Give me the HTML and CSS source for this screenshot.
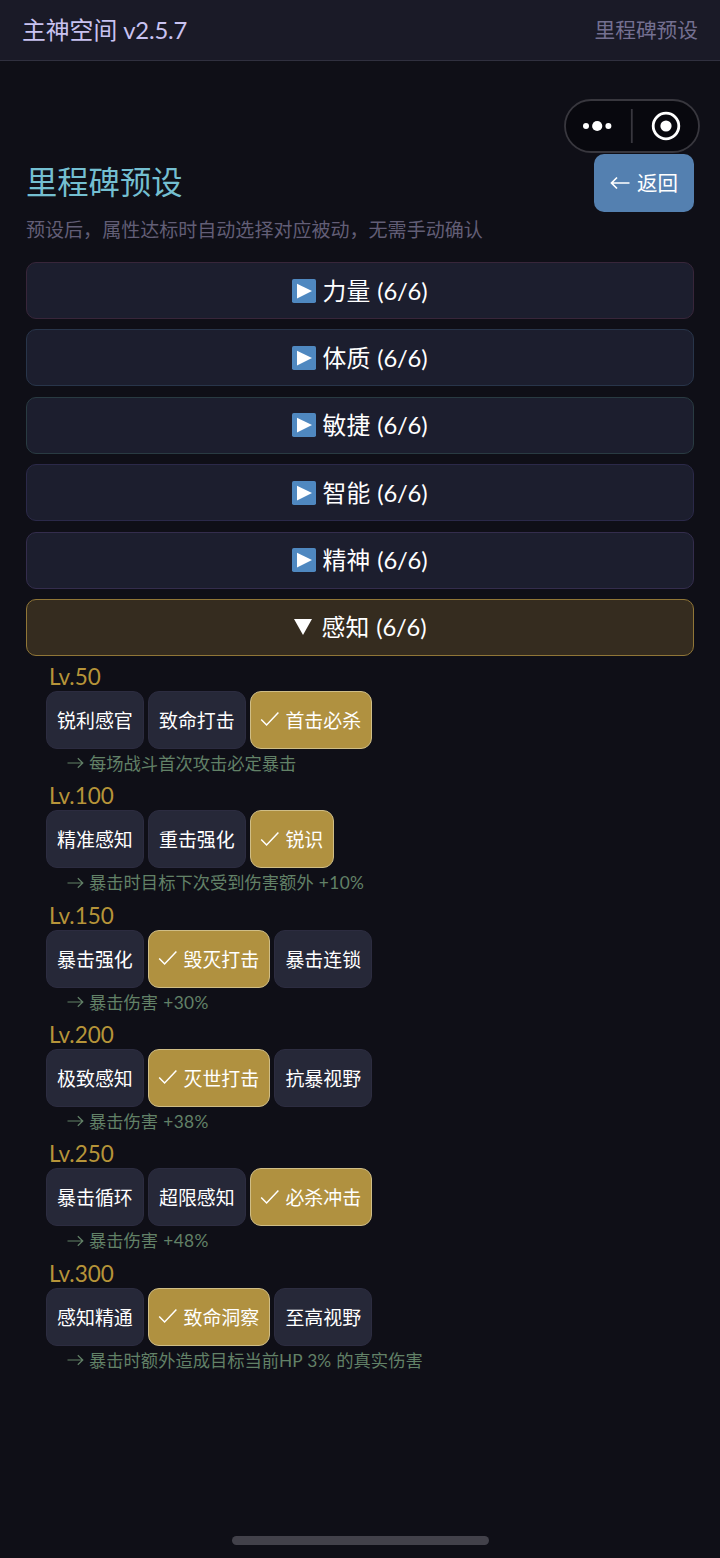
FILE: index.html
```html
<!DOCTYPE html>
<html lang="zh-CN">
<head>
<meta charset="utf-8">
<title>里程碑预设</title>
<link rel="stylesheet" href="styles.css">
</head>
<body>
<svg width="0" height="0" class="defs">
  <symbol id="play" viewBox="0 0 24 24"><rect width="24" height="24" rx="1.8" fill="#4f88c0"/><path d="M5 4.8 20 12 5 19.4Z" fill="#fff"/></symbol>
  <symbol id="check" viewBox="0 0 20 18"><path d="M1.2 9.4 6.6 15 18.4 2.6" fill="none" stroke="currentColor" stroke-width="1.5"/></symbol>
  <symbol id="arrow" viewBox="0 0 17 12"><path d="M.5 6H15.6M10.8 1.2 15.8 6l-5 4.8" fill="none" stroke="currentColor" stroke-width="1.2"/></symbol>
</svg>
<header class="topbar">
  <div class="app-name">主神空间 <span class="version">v2.5.7</span></div>
  <div class="page-name">里程碑预设</div>
</header>
<div class="capsule">
  <svg width="136" height="54" viewBox="0 0 136 54">
    <rect x="1" y="1" width="134" height="52" rx="26" fill="#08080e" stroke="#38373e" stroke-width="1.8"/>
    <g fill="#fff"><circle cx="22" cy="27" r="3"/><circle cx="33.2" cy="27" r="5.1"/><circle cx="44.4" cy="27" r="3"/></g>
    <path d="M67.8 10v34" stroke="#38373e" stroke-width="1.8"/>
    <circle cx="102" cy="27" r="12.8" fill="none" stroke="#fff" stroke-width="2.8"/><circle cx="102" cy="27" r="5.6" fill="#fff"/>
  </svg>
</div>
<main class="content">
  <div class="heading">
    <h1>里程碑预设</h1>
    <button class="back"><svg width="20" height="14" viewBox="0 0 20 14"><path d="M19.5 7H1.5M7 1.5 1.5 7 7 12.5" fill="none" stroke="currentColor" stroke-width="1.7"/></svg><span>返回</span></button>
  </div>
  <p class="hint">预设后，属性达标时自动选择对应被动，无需手动确认</p>
  <div class="stats">
    <button class="stat strength"><svg class="play"><use href="#play"/></svg><span>力量 <span class="count">(6/6)</span></span></button>
    <button class="stat body"><svg class="play"><use href="#play"/></svg><span>体质 <span class="count">(6/6)</span></span></button>
    <button class="stat agility"><svg class="play"><use href="#play"/></svg><span>敏捷 <span class="count">(6/6)</span></span></button>
    <button class="stat intellect"><svg class="play"><use href="#play"/></svg><span>智能 <span class="count">(6/6)</span></span></button>
    <button class="stat spirit"><svg class="play"><use href="#play"/></svg><span>精神 <span class="count">(6/6)</span></span></button>
    <button class="stat open"><svg class="down" viewBox="0 0 18 16"><path d="M0 0H18L9 16Z" fill="#fff"/></svg><span>感知 <span class="count">(6/6)</span></span></button>
  </div>
  <div class="levels">
    <section class="level">
      <h2>Lv.50</h2>
      <div class="options"><button class="option">锐利感官</button><button class="option">致命打击</button><button class="option chosen"><svg class="check"><use href="#check"/></svg>首击必杀</button></div>
      <p class="effect"><svg class="arrow"><use href="#arrow"/></svg><span>每场战斗首次攻击必定暴击</span></p>
    </section>
    <section class="level">
      <h2>Lv.100</h2>
      <div class="options"><button class="option">精准感知</button><button class="option">重击强化</button><button class="option chosen"><svg class="check"><use href="#check"/></svg>锐识</button></div>
      <p class="effect"><svg class="arrow"><use href="#arrow"/></svg><span>暴击时目标下次受到伤害额外 <span class="bonus">+10%</span></span></p>
    </section>
    <section class="level">
      <h2>Lv.150</h2>
      <div class="options"><button class="option">暴击强化</button><button class="option chosen"><svg class="check"><use href="#check"/></svg>毁灭打击</button><button class="option">暴击连锁</button></div>
      <p class="effect"><svg class="arrow"><use href="#arrow"/></svg><span>暴击伤害 <span class="bonus">+30%</span></span></p>
    </section>
    <section class="level">
      <h2>Lv.200</h2>
      <div class="options"><button class="option">极致感知</button><button class="option chosen"><svg class="check"><use href="#check"/></svg>灭世打击</button><button class="option">抗暴视野</button></div>
      <p class="effect"><svg class="arrow"><use href="#arrow"/></svg><span>暴击伤害 <span class="bonus">+38%</span></span></p>
    </section>
    <section class="level">
      <h2>Lv.250</h2>
      <div class="options"><button class="option">暴击循环</button><button class="option">超限感知</button><button class="option chosen"><svg class="check"><use href="#check"/></svg>必杀冲击</button></div>
      <p class="effect"><svg class="arrow"><use href="#arrow"/></svg><span>暴击伤害 <span class="bonus">+48%</span></span></p>
    </section>
    <section class="level">
      <h2>Lv.300</h2>
      <div class="options"><button class="option">感知精通</button><button class="option chosen"><svg class="check"><use href="#check"/></svg>致命洞察</button><button class="option">至高视野</button></div>
      <p class="effect"><svg class="arrow"><use href="#arrow"/></svg><span>暴击时额外造成目标当前HP 3% 的真实伤害</span></p>
    </section>
  </div>
</main>
<div class="home-bar"></div>
</body>
</html>
```

FILE: styles.css
```css
* { box-sizing: border-box; }
body {
  margin: 0;
  height: 1558px;
  position: relative;
  overflow: hidden;
  background: #0f0f17;
  color: #fff;
  font-family: Lato, "Noto Sans CJK SC", sans-serif;
}
.defs { position: absolute; }
button { font: inherit; color: inherit; margin: 0; padding: 0; white-space: nowrap; }
h1, h2, p { margin: 0; font-weight: 400; white-space: nowrap; }
svg { flex: none; display: block; }

.topbar {
  height: 61px;
  padding: 0 22px 3px;
  display: flex;
  align-items: center;
  justify-content: space-between;
  background: #1a1a27;
  border-bottom: 1px solid #30303f;
}
.app-name { font-size: 23.8px; color: #c9c3f1; }
.version { letter-spacing: -0.2px; }
.page-name { font-size: 20.7px; color: #747091; }

.capsule { position: absolute; left: 564px; top: 99px; }

.content { padding: 93px 26px 0; }
.heading { height: 58px; display: flex; align-items: center; justify-content: space-between; }
.heading h1 { font-size: 31.3px; line-height: 56px; padding-bottom: 2px; color: #74bfd1; }
.back {
  width: 100px;
  height: 58px;
  display: flex;
  align-items: center;
  justify-content: center;
  gap: 7px;
  border: 0;
  border-radius: 10px;
  background: #5480b0;
  font-size: 20.5px;
}
.back span { padding-bottom: 2px; }
.hint { margin-top: 4px; height: 28px; font-size: 19.05px; line-height: 28px; color: #625e76; }

.stats { margin-top: 18px; display: flex; flex-direction: column; gap: 10.4px; }
.stat {
  height: 57px;
  display: flex;
  align-items: center;
  justify-content: center;
  gap: 7px;
  padding-right: 1px;
  border: 1px solid;
  border-radius: 10px;
  background: #1c1e2e;
  font-size: 23.8px;
}
.stat > span { padding-bottom: 3px; }
.count { margin-left: 1px; letter-spacing: -0.2px; }
.strength { border-color: #38263a; }
.body { border-color: #28354a; }
.agility { border-color: #293b42; }
.intellect { border-color: #2b2949; }
.spirit { border-color: #342d4d; }
.open { background: #352c1f; border-color: #907637; gap: 10px; padding-right: 0; }
.play { width: 24px; height: 24px; }
.down { width: 18px; height: 16px; }

.levels { padding-left: 20px; }
.level { height: 119.35px; }
.level h2 { height: 35px; padding-left: 3px; font-size: 22.5px; line-height: 41px; color: #b69439; }
.options { display: flex; gap: 4.2px; }
.option {
  height: 58px;
  padding: 0 10px 1px;
  display: flex;
  align-items: center;
  border: 1px solid #2c2c40;
  border-radius: 11px;
  background: #262838;
  font-size: 18.95px;
}
.chosen { background: #b09140; border-color: #cfbd86; }
.check { width: 20px; height: 18px; margin: 0 5px 0 -0.5px; }
.effect { display: flex; align-items: center; gap: 5.5px; padding-left: 20.5px; height: 29px; font-size: 17.3px; line-height: 29px; word-spacing: 0.7px; color: #628167; }
.bonus { letter-spacing: 0.4px; }
.arrow { width: 17px; height: 12px; }

.home-bar { position: absolute; left: 232px; top: 1536px; width: 257px; height: 9px; border-radius: 5px; background: #42414a; }
```
